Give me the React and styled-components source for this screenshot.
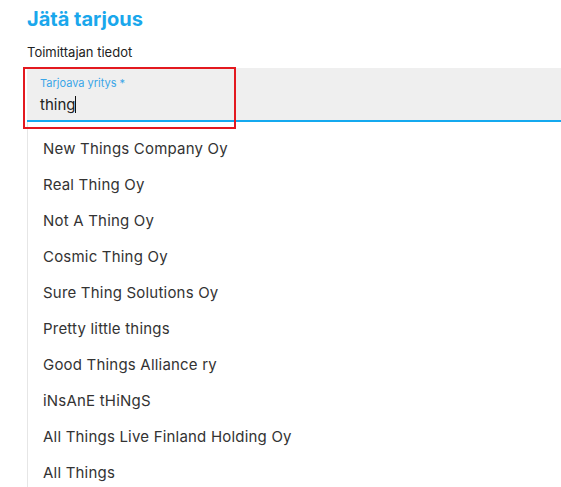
import React from "react";
import styled, { createGlobalStyle } from "styled-components";

const GlobalStyle = createGlobalStyle`
  body {
    margin: 0;
    background: #fff;
    font-family: Inter, "Noto Sans", sans-serif;
    overflow: hidden;
  }
`;

const Page = styled.div`
  padding: 6px 0 0 27px;
`;

const Title = styled.h2`
  margin: 0;
  font-size: 20px;
  line-height: 26px;
  font-weight: 700;
  color: #1aa7ec;
`;

const Section = styled.div`
  margin-top: 11px;
  font-size: 13px;
  line-height: 18px;
  color: #222;
`;

const FieldWrap = styled.div`
  position: relative;
  margin-top: 7px;
`;

const Field = styled.div`
  height: 54px;
  box-sizing: border-box;
  background: #efefef;
  border-bottom: 2px solid #14a9ef;
  padding: 8px 13px 0;
`;

const Label = styled.div`
  font-size: 11px;
  line-height: 14px;
  color: #3aa6e8;
`;

const Value = styled.div`
  margin-top: 5px;
  font-size: 15px;
  line-height: 20px;
  color: #222;
`;

const Caret = styled.span`
  display: inline-block;
  width: 1px;
  height: 17px;
  background: #111;
  vertical-align: -3px;
`;

const Highlight = styled.div`
  position: absolute;
  left: -4px;
  top: -1px;
  width: 213px;
  height: 62px;
  box-sizing: border-box;
  border: 2px solid #e3191f;
  pointer-events: none;
`;

const List = styled.ul`
  list-style: none;
  margin: 0;
  padding: 9px 0 0;
  border-left: 1px solid #e6e6e6;
`;

const Item = styled.li`
  height: 36px;
  line-height: 36px;
  padding-left: 15px;
  font-size: 15px;
  letter-spacing: 0.2px;
  color: #333;
`;

const options = [
  "New Things Company Oy",
  "Real Thing Oy",
  "Not A Thing Oy",
  "Cosmic Thing Oy",
  "Sure Thing Solutions Oy",
  "Pretty little things",
  "Good Things Alliance ry",
  "iNsAnE tHiNgS",
  "All Things Live Finland Holding Oy",
  "All Things",
];

export default function App() {
  return (
    <>
      <GlobalStyle />
      <Page>
        <Title>Jätä tarjous</Title>
        <Section>Toimittajan tiedot</Section>
        <FieldWrap>
          <Field>
            <Label>Tarjoava yritys *</Label>
            <Value>
              thing
              <Caret />
            </Value>
          </Field>
          <Highlight />
        </FieldWrap>
        <List>
          {options.map((o) => (
            <Item key={o}>{o}</Item>
          ))}
        </List>
      </Page>
    </>
  );
}
